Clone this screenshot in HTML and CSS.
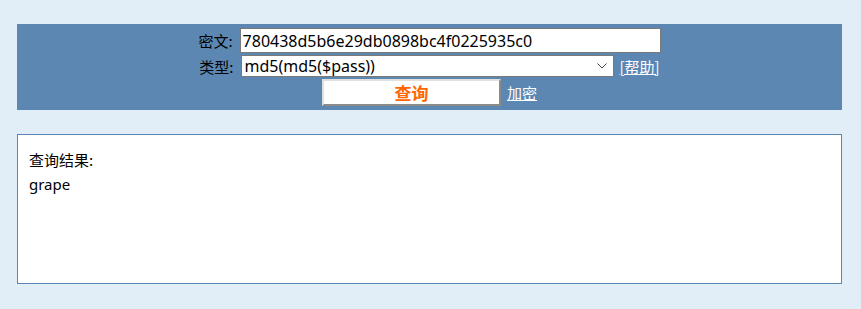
FILE: index.html
```html
<!DOCTYPE html>
<html lang="zh-CN">
<head>
    <meta charset="UTF-8">
    <title>MD5 查询</title>
    <link rel="stylesheet" href="styles.css">
</head>
<body>
    <div class="panel">
        <div class="row">
            <label for="hash">密文:</label>
            <input type="text" id="hash" class="hash" value="780438d5b6e29db0898bc4f0225935c0">
        </div>
        <div class="row">
            <label for="type">类型:</label>
            <select id="type" class="type">
                <option>md5(md5($pass))</option>
            </select>
            <a href="#" class="link">[帮助]</a>
        </div>
        <div class="row">
            <button class="query">查询</button>
            <a href="#" class="link">加密</a>
        </div>
    </div>

    <div class="result">
        <p>查询结果:</p>
        <p class="latin">grape</p>
    </div>
</body>
</html>
```

FILE: styles.css
```css
body {
    margin: 0;
    padding: 24px 19px 25px 17px;
    background-color: #e2eef7;
    font-family: "Noto Sans CJK SC", "Noto Sans", sans-serif;
    font-size: 15px;
    color: #000;
}
.panel {
    background-color: #5b87b2;
    padding: 4px 0 4px;
    text-align: center;
}
.row {
    height: 25px;
    display: flex;
    justify-content: center;
    align-items: center;
    gap: 6px;
    margin-bottom: 2px;
}
.row:nth-child(2) {
    height: 22px;
}
.row:last-child {
    height: 27px;
    margin-bottom: 0;
}
label {
    color: #000;
    margin-right: 1px;
}
.hash {
    width: 421px;
    height: 25px;
    box-sizing: border-box;
    border: 1px solid #7a7a7a;
    padding: 0 2px;
    font-family: "Noto Sans", sans-serif;
    font-size: 16px;
    background: #fff;
}
.type {
    -webkit-appearance: none;
    appearance: none;
    width: 373px;
    height: 22px;
    box-sizing: border-box;
    border: 1px solid #7a7a7a;
    border-radius: 0;
    padding: 0 3px;
    font-family: "Noto Sans", sans-serif;
    font-size: 16px;
    line-height: 20px;
    color: #000;
    background: #fff url("data:image/svg+xml,%3Csvg xmlns='http://www.w3.org/2000/svg' width='10' height='6'%3E%3Cpath d='M0.5 0.5 L5 5 L9.5 0.5' fill='none' stroke='%23444' stroke-width='1'/%3E%3C/svg%3E") no-repeat right 6px center;
}
.link {
    color: #fff;
    text-decoration: underline;
}
.query {
    width: 179px;
    height: 27px;
    background: #fff;
    border: 2px solid;
    border-color: #e0e0e0 #8a8a8a #8a8a8a #e0e0e0;
    color: #ff6600;
    font-family: "Noto Sans CJK SC", sans-serif;
    font-size: 17px;
    font-weight: bold;
    padding: 0;
    line-height: 21px;
}
.result {
    margin-top: 24px;
    height: 150px;
    box-sizing: border-box;
    background: #fff;
    border: 1px solid #5b87b2;
    padding: 13px 11px 0;
}
.result p {
    margin: 0;
    line-height: 24px;
}
.latin {
    font-family: "Noto Sans", sans-serif;
}
```
